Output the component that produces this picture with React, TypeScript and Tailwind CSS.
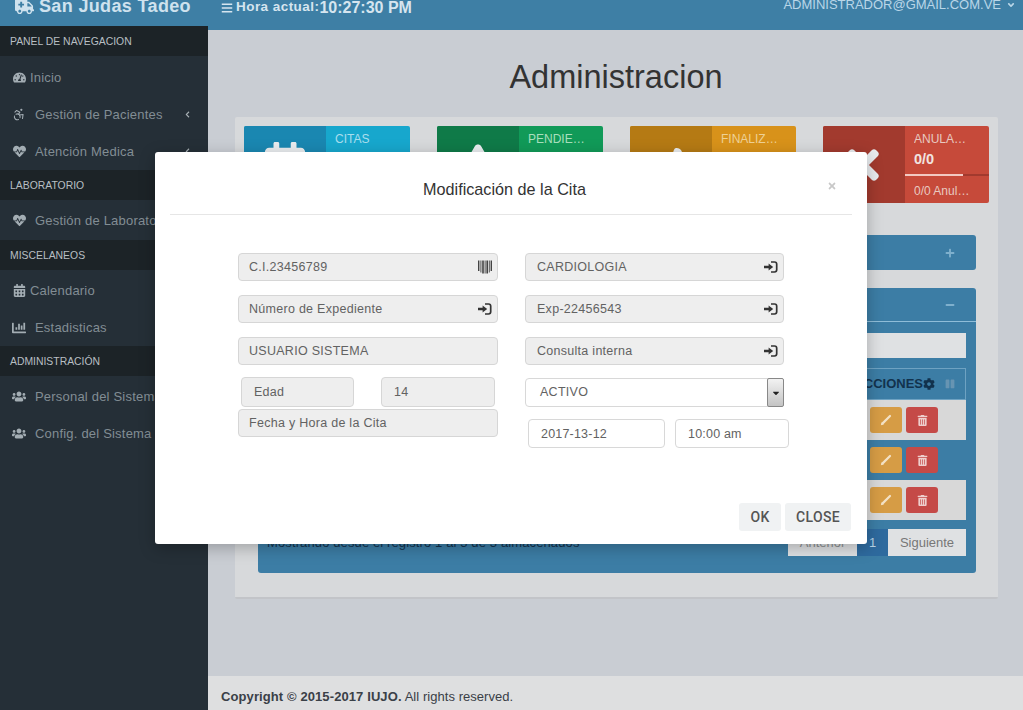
import React from "react";
import {
  FaAmbulance, FaBars, FaCalendarAlt, FaCaretDown, FaChartBar, FaChevronLeft, FaCog,
  FaExclamationTriangle, FaHeartbeat, FaMinus, FaPlus, FaTachometerAlt, FaThumbsUp,
  FaTimes, FaTrashAlt, FaUsers, FaAngleDown, FaPause,
} from "react-icons/fa";
import { Accessibility } from "lucide-react";

function Section({ label }: { label: string }) {
  return (
    <div className="h-[30px] shrink-0 bg-[#1c2327] flex items-center pl-[10px] pt-[1px] text-[10.4px] text-[#b8bfc3] whitespace-nowrap">
      {label}
    </div>
  );
}

function Item({ icon, label, gap, caret }: { icon: React.ReactNode; label: string; gap: string; caret?: boolean }) {
  return (
    <div className="h-[37px] shrink-0 flex items-center pl-3 text-[13px] tracking-[0.2px] text-[#828d94] whitespace-nowrap relative">
      <span className="w-[14px] flex justify-center shrink-0 text-[#a3adb3]">{icon}</span>
      <span className={gap}>{label}</span>
      {caret && <FaChevronLeft className="absolute left-[184px] text-[7px] text-[#aab2b7]" />}
    </div>
  );
}

function InfoBox({ icon, title, sub, num, left, right, bar, track, titleColor }: { icon: React.ReactNode; title: string; sub: string; num: string; left: string; right: string; bar: string; track: string; titleColor: string }) {
  return (
    <div className={`w-[166px] h-[77px] flex rounded-[2px] overflow-hidden ${right}`}>
      <div className={`w-[82px] flex items-center justify-center text-[46px] text-[#e9ecef] ${left}`}>{icon}</div>
      <div className={`flex-1 min-w-0 pl-[9px] pr-[17px] pt-[5px] ${titleColor}`}>
        <div className="text-[12px] leading-[16px] truncate">{title}</div>
        <div className="text-[14.5px] leading-[20px] mt-[2px] font-bold text-[#f1e4e0]">{num}</div>
        <div className={`-ml-[9px] -mr-[17px] h-[2px] mt-[5px] ${track}`}>
          <div className={`h-[2px] w-[58px] ${bar}`} />
        </div>
        <div className="text-[12px] leading-[16px] mt-[7px] -mr-[3px] truncate">{sub}</div>
      </div>
    </div>
  );
}

function LoginIcon() {
  return (
    <svg width="14" height="12" viewBox="0 0 14 12" className="shrink-0">
      <path d="M7 1 H10.5 a2.2 2.2 0 0 1 2.2 2.2 V8.8 a2.2 2.2 0 0 1 -2.2 2.2 H7" fill="none" stroke="#333" strokeWidth="1.7" />
      <path d="M0.6 6 H5" stroke="#333" strokeWidth="2.6" strokeLinecap="round" />
      <polygon points="4.6,2.4 9.2,6 4.6,9.6" fill="#333" />
    </svg>
  );
}

function BarcodeIcon() {
  return (
    <svg width="14" height="14" viewBox="0 0 14 14" className="shrink-0">
      <rect x="0" y="0.5" width="1.4" height="10.5" fill="#444" />
      <rect x="2.4" y="0.5" width="1" height="12" fill="#555" />
      <rect x="4.2" y="0.5" width="1.6" height="13" fill="#444" />
      <rect x="6.6" y="0.5" width="1" height="13" fill="#555" />
      <rect x="8.4" y="0.5" width="1.6" height="13" fill="#444" />
      <rect x="10.8" y="0.5" width="1" height="12" fill="#555" />
      <rect x="12.6" y="0.5" width="1.4" height="10.5" fill="#444" />
    </svg>
  );
}

function PencilIcon() {
  return (
    <svg width="12" height="12" viewBox="0 0 12 12">
      <path d="M2.6 9.4 L10 2" stroke="#f3e2c6" strokeWidth="2.2" strokeLinecap="round" />
      <polygon points="0.8,11.2 1.6,8.2 3.8,10.4" fill="#f3e2c6" />
    </svg>
  );
}

function Field({ text, icon, className = "" }: { text: string; icon?: React.ReactNode; className?: string }) {
  return (
    <div className={`h-[28px] bg-[#eeeeee] border border-[#d6d6d6] rounded-[4px] flex items-center justify-between pr-[5px] text-[12.5px] tracking-[0.28px] text-[#626262] whitespace-nowrap ${className}`}>
      <span>{text}</span>
      {icon}
    </div>
  );
}

function WhiteField({ text, className = "" }: { text: string; className?: string }) {
  return (
    <div className={`h-[29px] bg-white border border-[#d8d8d8] rounded-[4px] flex items-center pl-3 pt-[1px] text-[12.5px] tracking-[0.2px] text-[#626262] whitespace-nowrap ${className}`}>
      {text}
    </div>
  );
}

function Row({ dark }: { dark?: boolean }) {
  return (
    <div className={`h-10 flex items-center justify-end pr-[28px] gap-[4px] ${dark ? "bg-[#3c7da5]" : "bg-[#d8d8d8]"}`}>
      <div className="w-[32px] h-[26px] rounded-[3px] bg-[#d69c45] flex items-center justify-center"><PencilIcon /></div>
      <div className="w-[32px] h-[26px] rounded-[3px] bg-[#c54a47] flex items-center justify-center text-[11px] text-[#eecfcd]"><FaTrashAlt /></div>
    </div>
  );
}

export default function App() {
  return (
    <div className="relative w-[1023px] h-[710px] overflow-hidden flex bg-[#c9cdd3] font-['Liberation_Sans',Arial,sans-serif]">
      <aside className="w-[208px] shrink-0 bg-[#252f37] flex flex-col">
        <div className="h-[26px] shrink-0 bg-[#3e7fa5] flex items-start pl-[15px] text-[#cfe2ee] font-bold overflow-hidden">
          <div className="flex items-center gap-[5px] -mt-[5px] text-[18px] leading-[22px] tracking-[0.35px] whitespace-nowrap">
            <FaAmbulance className="text-[19px]" />
            <span>San Judas Tadeo</span>
          </div>
        </div>
        <Section label="PANEL DE NAVEGACION" />
        <div className="h-[3px] shrink-0" />
        <Item icon={<FaTachometerAlt className="text-[13px]" />} label="Inicio" gap="ml-[4px]" />
        <Item icon={<Accessibility className="w-[15px] h-[15px]" strokeWidth={1.8} />} label="Gestión de Pacientes" gap="ml-[9px]" caret />
        <Item icon={<FaHeartbeat className="text-[13px]" />} label="Atención Medica" gap="ml-[9px]" caret />
        <Section label="LABORATORIO" />
        <div className="h-[2px] shrink-0" />
        <Item icon={<FaHeartbeat className="text-[13px]" />} label="Gestión de Laboratorio" gap="ml-[9px]" />
        <div className="h-px shrink-0" />
        <Section label="MISCELANEOS" />
        <div className="h-[2px] shrink-0" />
        <Item icon={<FaCalendarAlt className="text-[13px]" />} label="Calendario" gap="ml-[4px]" />
        <Item icon={<FaChartBar className="text-[14px]" />} label="Estadisticas" gap="ml-[9px]" />
        <Section label="ADMINISTRACIÓN" />
        <div className="h-[2px] shrink-0" />
        <Item icon={<FaUsers className="text-[15px]" />} label="Personal del Sistema" gap="ml-[9px]" />
        <Item icon={<FaUsers className="text-[15px]" />} label="Config. del Sistema" gap="ml-[9px]" />
      </aside>

      <main className="flex-1 min-w-0 flex flex-col">
        <header className="h-[30px] shrink-0 bg-[#3e7fa5] flex items-start justify-between pl-[13px] pr-[7px] text-[#d6e5ef] overflow-hidden">
          <div className="flex items-center h-[15px] whitespace-nowrap font-bold text-[13.5px] tracking-[0.45px]">
            <FaBars className="text-[12px] mr-[3px]" />
            <span>Hora actual:</span>
            <span className="text-[16px] tracking-[0px]">10:27:30 PM</span>
          </div>
          <div className="-mt-[2px] flex items-center h-[14px] text-[13px] text-[#b9d6e8] whitespace-nowrap">
            ADMINISTRADOR@GMAIL.COM.VE
            <FaAngleDown className="ml-[5px] text-[10px]" />
          </div>
        </header>

        <div className="flex-1 min-h-0 pl-[27px] pr-[25px] flex flex-col">
          <h1 className="h-[87px] shrink-0 flex items-center justify-center text-[32.5px] text-[#333] pt-[8px] pr-[1px]">Administracion</h1>
          <section className="h-[482px] bg-[#d7d9db] border-b-2 border-[#c2c4c8] rounded-[2px] pt-[9px]">
            <div className="flex gap-[27px] px-[9px]">
              <InfoBox icon={<FaCalendarAlt />} title="CITAS" num="3/3" sub="3/3 Citas" left="bg-[#1a87b1]" right="bg-[#17a7cd]" bar="bg-white" track="bg-[#1a87b1]" titleColor="text-[#a9deed]" />
              <InfoBox icon={<FaExclamationTriangle />} title="PENDIENTES" num="3/3" sub="3/3 Pendientes" left="bg-[#0f7a48]" right="bg-[#119a58]" bar="bg-white" track="bg-[#0f7a48]" titleColor="text-[#a9dfbd]" />
              <InfoBox icon={<FaThumbsUp className="mt-[12px]" />} title="FINALIZADAS" num="0/0" sub="0/0 Finalizadas" left="bg-[#b57a14]" right="bg-[#d8921a]" bar="bg-white" track="bg-[#b57a14]" titleColor="text-[#eed196]" />
              <InfoBox icon={<FaTimes className="-ml-[3px]" />} title="ANULADAS" num="0/0" sub="0/0 Anuladas" left="bg-[#a23a2e]" right="bg-[#c64a3a]" bar="bg-[#f3c9c2]" track="bg-[#a23a2e]" titleColor="text-[#e8c9c0]" />
            </div>

            <div className="mt-[32px] ml-[23px] mr-[22px] h-[35px] bg-[#3c7da5] rounded-[3px] flex items-center justify-end pr-[21px] text-[10px] text-[#7fb0cd]">
              <FaPlus />
            </div>

            <div className="mt-[18px] ml-[23px] mr-[22px] h-[285px] bg-[#3c7da5] rounded-[3px] flex flex-col">
              <div className="h-[34px] shrink-0 border-b border-[#8fbdd8] flex items-center justify-end pr-[21px] text-[10px] text-[#7fb0cd]">
                <FaMinus />
              </div>
              <div className="mx-[10px] mt-[11px] h-[25px] shrink-0 bg-[#dfe1e3]" />
              <div className="mx-[10px] mt-[10px] shrink-0">
                <div className="h-[32px] border border-[#6ea2c2] flex items-center justify-end pr-[10px] text-[13px] font-bold text-[#12324d]">
                  <span>ACCIONES</span>
                  <FaCog className="text-[12px]" />
                  <FaPause className="ml-[10px] text-[10px] text-[#6794b2]" />
                </div>
                <Row />
                <Row dark />
                <Row />
              </div>
              <div className="ml-[9px] mr-[10px] mt-[9px] h-[27px] shrink-0 flex items-center justify-between text-[13px]">
                <span className="text-[#12324d] tracking-[0.12px] pt-[1px]">Mostrando desde el registro 1 al 3 de 3 almacenados</span>
                <div className="flex h-[27px]">
                  <div className="w-[69px] bg-[#dfe1e3] flex items-center justify-center text-[#8b8f92]">Anterior</div>
                  <div className="w-[31px] bg-[#2e6a9e] flex items-center justify-center text-[#b7d3e6]">1</div>
                  <div className="w-[78px] bg-[#dfe1e3] flex items-center justify-center text-[#777]">Siguiente</div>
                </div>
              </div>
            </div>
          </section>
        </div>

        <footer className="h-[34px] shrink-0 bg-[#dedfe0] flex items-center pl-[13px] pt-[8px] text-[13px] text-[#3a4047] whitespace-nowrap">
          <span className="font-bold tracking-[0.1px]">Copyright © 2015-2017 IUJO.</span>
          <span className="ml-[3px] tracking-[0.05px]">All rights reserved.</span>
        </footer>
      </main>

      <div className="absolute left-[155px] top-[152px] w-[712px] h-[392px] bg-white rounded-[3px] shadow-[0_4px_16px_rgba(0,0,0,0.25)] flex flex-col">
        <div className="mx-[15px] h-[63px] shrink-0 border-b border-[#e6e6e6] relative flex items-center justify-center text-[#333] text-[16.2px] pt-[13px] pr-[13px]">
          Modificación de la Cita
          <FaTimes className="absolute right-[15px] top-[29px] text-[10px] text-[#c8c8c8]" />
        </div>
        <div className="flex pl-[83px] gap-[27px] pt-[38px]">
          <div className="w-[260px] flex flex-col">
            <Field text="C.I.23456789" icon={<BarcodeIcon />} className="pl-[10px]" />
            <Field text="Número de Expediente" icon={<LoginIcon />} className="mt-[14px] pl-[10px]" />
            <Field text="USUARIO SISTEMA" className="mt-[14px] pl-[10px]" />
            <div className="mt-[12px] flex pl-[3px] gap-[27px]">
              <Field text="Edad" className="w-[113px] h-[30px] pl-[12px]" />
              <Field text="14" className="w-[114px] h-[30px] pl-[12px]" />
            </div>
            <Field text="Fecha y Hora de la Cita" className="mt-[2px] pl-[10px]" />
          </div>
          <div className="w-[259px] flex flex-col">
            <Field text="CARDIOLOGIA" icon={<LoginIcon />} className="pl-[11px]" />
            <Field text="Exp-22456543" icon={<LoginIcon />} className="mt-[14px] pl-[11px]" />
            <Field text="Consulta interna" icon={<LoginIcon />} className="mt-[14px] pl-[11px]" />
            <div className="mt-[13px] h-[29px] bg-white border border-[#d8d8d8] rounded-[4px] flex items-center justify-between pl-[14px] text-[12.5px] tracking-[0.28px] text-[#626262]">
              <span>ACTIVO</span>
              <span className="w-[17px] h-[29px] -mr-px border border-[#888] rounded-[2px] bg-[linear-gradient(#f2f2f2,#c4c4c4)] flex items-center justify-center text-[10px] text-[#222]">
                <FaCaretDown />
              </span>
            </div>
            <div className="mt-[12px] flex pl-[3px] gap-[10px] w-[264px]">
              <WhiteField text="2017-13-12" className="w-[137px]" />
              <WhiteField text="10:00 am" className="w-[114px]" />
            </div>
          </div>
        </div>
        <div className="mt-auto mb-[13px] mr-[16px] flex justify-end gap-[4px] font-['Roboto',sans-serif] font-medium text-[14px] tracking-[0.3px] text-[#555]">
          <div className="w-[42px] h-[28px] rounded-[3px] bg-[#f0f2f3] flex items-center justify-center">OK</div>
          <div className="w-[66px] h-[28px] rounded-[3px] bg-[#f0f2f3] flex items-center justify-center">CLOSE</div>
        </div>
      </div>
    </div>
  );
}
